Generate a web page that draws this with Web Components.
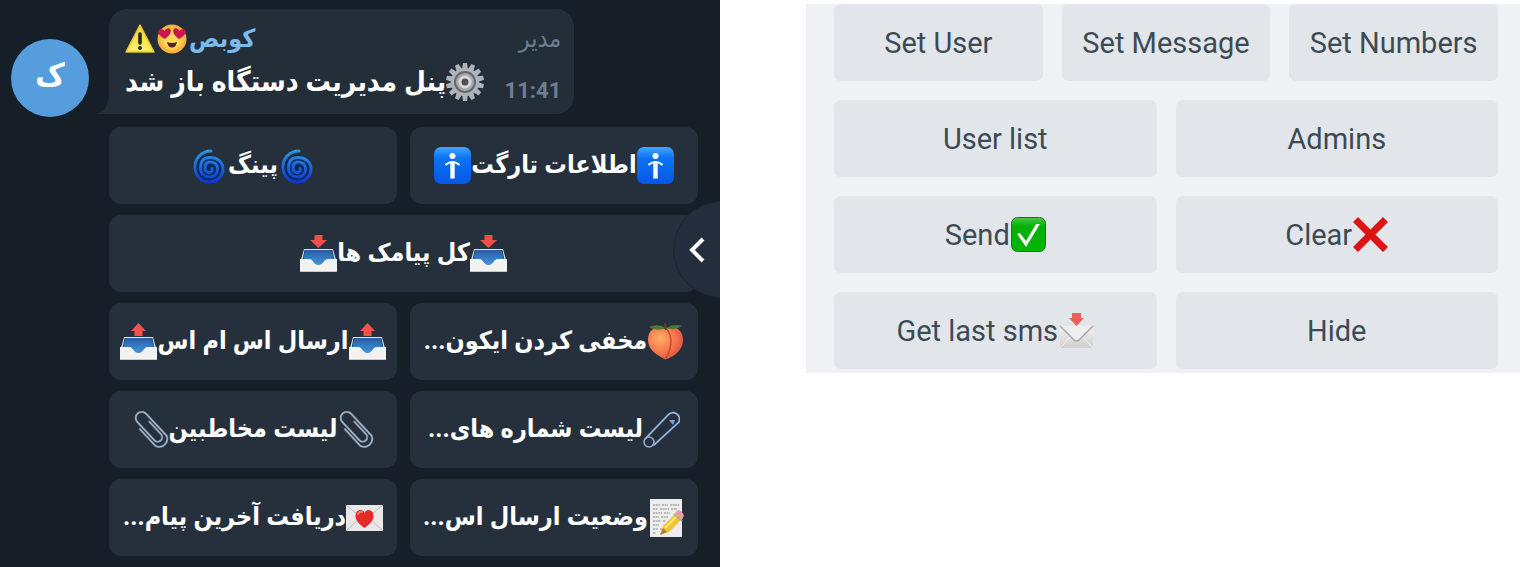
<!DOCTYPE html>
<html lang="fa">
<head>
<meta charset="utf-8">
<meta name="viewport" content="width=device-width, initial-scale=1">
<title>Bot panels</title>
<style>
  body { margin: 0; background: #fff; }
</style>
</head>
<body>
<panel-board>
  <chat-panel slot="chat">
    <chat-avatar slot="avatar">ک</chat-avatar>
    <chat-message slot="message">
      <span slot="name">کوبص</span>
      <emoji-icon slot="name" name="face"></emoji-icon>
      <emoji-icon slot="name" name="warning"></emoji-icon>
      <span slot="role">مدیر</span>
      <emoji-icon slot="text" name="gear"></emoji-icon>
      <span slot="text">پنل مدیریت دستگاه باز شد</span>
      <time slot="time">11:41</time>
    </chat-message>
    <key-button start="info" end="info">اطلاعات تارگت</key-button>
    <key-button start="cyclone" end="cyclone">پینگ</key-button>
    <key-button wide start="inbox" end="inbox">کل پیامک ها</key-button>
    <key-button start="peach">مخفی کردن ایکون...</key-button>
    <key-button start="outbox" end="outbox">ارسال اس ام اس</key-button>
    <key-button start="pin">لیست شماره های...</key-button>
    <key-button start="clip" end="clip">لیست مخاطبین</key-button>
    <key-button start="memo">وضعیت ارسال اس...</key-button>
    <key-button start="love">دریافت آخرین پیام...</key-button>
  </chat-panel>
  <reply-keyboard slot="keyboard">
    <reply-key third>Set User</reply-key>
    <reply-key third>Set Message</reply-key>
    <reply-key third>Set Numbers</reply-key>
    <reply-key>User list</reply-key>
    <reply-key>Admins</reply-key>
    <reply-key end="check">Send</reply-key>
    <reply-key end="cross">Clear</reply-key>
    <reply-key end="mail">Get last sms</reply-key>
    <reply-key>Hide</reply-key>
  </reply-keyboard>
</panel-board>

<script>
const tray = `<defs><linearGradient id="b" x1="0" y1="0" x2="0" y2="1"><stop offset="0" stop-color="#235f9f"/><stop offset="1" stop-color="#4a9be6"/></linearGradient></defs>
  <path d="M4 14h29l3 11H1z" fill="#dfe3e6"/><path d="M5 15h27l3 17H2z" fill="url(#b)"/><path d="M5 15l-2 10M32 15l2 10" stroke="#174a7c" fill="none"/>
  <path d="M0 24h9c5 0 4 6 9.500 6s4.500-6 9.500-6h9v13H0z" fill="#f2f2f0"/><path d="M0 36.500h37" stroke="#c9c9c6"/>`;
const clipWire = 'M23 10v17a4.500 4.500 0 0 1-9 0V2a6 6 0 0 1 12 0v30a8 8 0 0 1-15 0V9';
const clip = `<g fill="none" stroke-linecap="round" transform="rotate(-43 18.500 18.500) translate(0 2)"><path d="${clipWire}" stroke="#59697b" stroke-width="2.400"/><path d="${clipWire}" stroke="#a9b8c8" stroke-width="1.300"/></g>`;
const teeth = Array.from({length: 14}, (_, i) => `<path d="M17 0h4l1 7h-6z" transform="rotate(${i * 360 / 14} 19 19)"/>`).join('');
const ICONS = {
  info: [37, 37, `<defs><linearGradient id="g" x1="0" y1="0" x2="0" y2="1"><stop offset="0" stop-color="#43a4ff"/><stop offset=".3" stop-color="#0b73f3"/><stop offset="1" stop-color="#0757e6"/></linearGradient></defs>
    <rect width="37" height="37" rx="7" fill="url(#g)"/><circle cx="18.500" cy="9" r="3" fill="#fff"/><path d="M12 17.500q6.500-5 13 0" stroke="#fff" fill="none" stroke-width="2" stroke-linecap="round"/><path d="M18.500 14.500v17" stroke="#fff" stroke-width="4.400"/>`],
  cyclone: [38, 36, `<defs><linearGradient id="g" gradientUnits="userSpaceOnUse" x1="0" y1="2" x2="0" y2="35"><stop offset="0" stop-color="#2c9ade"/><stop offset="1" stop-color="#0e35d2"/></linearGradient></defs>
    <g transform="translate(3 0)"><circle cx="16" cy="20" r="13" fill="#06265c"/><path d="M18 3C8 3 1.500 11 2 20c.5 8 7 14 14 14 8 0 14-6 14-13S24 9.500 17 9.500 7.500 14 7.500 20s4 9 9 9 8-3 8-8-3.500-7-7.500-7-5 3-5 6 2 4.500 4.500 4.500 3-2 2.500-4" fill="none" stroke="url(#g)" stroke-width="3" stroke-linecap="round"/></g>`],
  inbox: [37, 37, tray + `<path d="M14.500 0h8v5h4.500l-8.500 8L10 5h4.500z" fill="#ef4f4a"/>`],
  outbox: [37, 37, tray + `<path d="M14.500 13h8V8H26L18.500 0 11 8h3.500z" fill="#f4514b"/>`],
  peach: [37, 37, `<defs><radialGradient id="g" cx=".35" cy=".35" r=".75"><stop offset="0" stop-color="#ffac68"/><stop offset=".6" stop-color="#f4744a"/><stop offset="1" stop-color="#d94b3f"/></radialGradient></defs>
    <path d="M18 6C8 1 1 8 1 17s8 15 17.500 19.500C29 33 36 26 36 17S29 1 18 6z" fill="url(#g)"/><path d="M19 5c7 8 6 20 0 30" fill="none" stroke="#c94b32" stroke-width="1.500"/><path d="M19 5Q11 0 2 4q8 5 17 1Q28 0 35 3q-7 5-16 2z" fill="#4c7a35"/><path d="M18 0l1 7" stroke="#5b4327" stroke-width="2"/>`],
  pin: [37, 37, `<g fill="none" stroke-linecap="round"><path d="M2 28L26 3q4-3 8 0t2 8L11 34" stroke="#6f8db6" stroke-width="2"/><path d="M2 28L26 3q4-3 8 0t2 8L11 34" stroke="#b5c7e0" stroke-width="1"/><circle cx="6" cy="31" r="5" stroke="#93acd0" stroke-width="1.600"/></g><path d="M26 9l6 0-2 5z" fill="#7ba4e0"/>`],
  clip: [37, 37, clip],
  memo: [37, 38, `<path d="M2 0h32v38H2z" fill="#ecedec"/><path d="M5 6h7m2 0h6m2 0h9M5 10h5m2 0h9m2 0h6M5 14h9m2 0h6M5 18h6m2 0h7M5 22h8m2 0h3M5 26h6M5 30h5m2 0h2M5 34h3" stroke="#858585" stroke-width="1.200" stroke-dasharray="2 .6"/>
    <path d="M12 36l3-9 14-14 6 6-14 14z" fill="#f4c430"/><path d="M17 29L31 15" stroke="#fce67a" stroke-width="2"/><path d="M27 14l3-3q4 0 6 6l-2 3z" fill="#eb99a5"/><path d="M26 15l8 7" stroke="#aab0a8" stroke-width="2"/><path d="M12 36l3-7 4 4z" fill="#b27c38"/>`],
  love: [37, 26, `<path d="M0 0h37v26H0z" fill="#e8e8e8"/><path d="M0 26l14-13M37 26L23 13M0 0l18.500 15L37 0" stroke="#b8b8b8" fill="none"/><path d="M18.500 23C13 19 9 15 9.500 10c.5-5 7-7 9-2 2-5 8.500-3 9 2 .5 5-3.500 9-9 13z" fill="#e22c2c"/><path d="M12 9q1-3 4-2" stroke="#ff7870" stroke-width="2" fill="none" stroke-linecap="round"/>`],
  face: [30, 30, `<defs><radialGradient id="g"><stop offset=".5" stop-color="#ffdb5c"/><stop offset="1" stop-color="#f2ab35"/></radialGradient></defs><circle cx="15" cy="15" r="14.500" fill="url(#g)"/>
    <path d="M8 15C3 12 0 9 1.500 6.500 3 4 6 5 7.500 7c1-2.500 4.500-4 6-1.500C15 8.500 12 12 8 15zM22 15c5-3 8-6 6.500-8.500C27 4 24 5 22.500 7c-1-2.500-4.500-4-6-1.500C15 8.500 18 12 22 15z" fill="#d0144f"/><path d="M10 18q5 2 10 0-1 5.500-5 5.500T10 18z" fill="#55251b"/>`],
  warning: [30, 30, `<defs><linearGradient id="g" x1="0" y1="0" x2="0" y2="1"><stop offset="0" stop-color="#f5d52f"/><stop offset="1" stop-color="#fff06a"/></linearGradient></defs><path d="M15 1L29 28H1z" fill="url(#g)" stroke="#e8c62e" stroke-linejoin="round" stroke-width="1.500"/><path d="M15 10v9" stroke="#2a2b25" stroke-width="3.600" stroke-linecap="round"/><circle cx="15" cy="24" r="2" fill="#2a2b25"/>`],
  gear: [38, 38, `<g fill="#aeb2b9">${teeth}</g><circle cx="19" cy="19" r="14" fill="#aeb2b9"/><circle cx="19" cy="19" r="10" fill="#a8a9ac" stroke="#66686d" stroke-width="2"/><circle cx="19" cy="19" r="5" fill="#4d4f55" stroke="#d5d7dc" stroke-width="3"/>`],
  check: [35, 35, `<defs><linearGradient id="g" x1="0" y1="0" x2="0" y2="1"><stop offset="0" stop-color="#52c74d"/><stop offset=".25" stop-color="#06af08"/><stop offset="1" stop-color="#03b604"/></linearGradient></defs><rect x=".5" y=".5" width="34" height="34" rx="6" fill="url(#g)" stroke="#087f15"/><path d="M6 17l3-1 6 8L25 7h4L15 30z" fill="#f5fff3"/>`],
  cross: [35, 35, `<path d="M0 5L5 0l12.500 12.500L30 0l5 5-12.500 12.500L35 30l-5 5-12.500-12.500L5 35l-5-5 12.500-12.500z" fill="#dc1414"/>`],
  mail: [35, 35, `<defs><linearGradient id="g" x1="0" y1="0" x2="0" y2="1"><stop offset="0" stop-color="#f2f2f2"/><stop offset="1" stop-color="#cfcfcf"/></linearGradient></defs><path d="M1 13h33v22H1z" fill="url(#g)"/><path d="M1 35l11-12M34 35L23 23" stroke="#f5f5f5" fill="none"/><path d="M1 13l14 14q2.500 2 5 0l14-14" stroke="#a9a9a9" stroke-width="1.500" fill="#eee"/><path d="M13 0h9v5h3l-7.500 8L10 5h3z" fill="#ea605b"/>`]
};

customElements.define('emoji-icon', class extends HTMLElement {
  static observedAttributes = ['name'];
  constructor() {
    super();
    this.attachShadow({ mode: 'open' });
  }
  attributeChangedCallback(attribute, previous, name) {
    const [w, h, art] = ICONS[name];
    this.shadowRoot.innerHTML = `<style>:host { display: inline-flex; flex: none; } svg { display: block; }</style>
      <svg width="${w}" height="${h}" viewBox="0 0 ${w} ${h}" aria-hidden="true">${art}</svg>`;
  }
});

const define = (tag, html, setup) => {
  const template = document.createElement('template');
  template.innerHTML = html;
  customElements.define(tag, class extends HTMLElement {
    constructor() {
      super();
      this.attachShadow({ mode: 'open' }).append(template.content.cloneNode(true));
    }
    connectedCallback() { setup?.(this, this.shadowRoot); }
  });
};

const addIcons = (host, root) => {
  for (const side of ['start', 'end']) {
    const name = host.getAttribute(side);
    const icon = root.querySelector('.' + side);
    if (name) icon.setAttribute('name', name); else icon?.remove();
  }
};

define('panel-board', `<style>
  :host { display: grid; grid-template-columns: 720fr 86fr 714fr; align-items: start; min-height: 100vh; }
  slot { display: block; }
  .keyboard { grid-column: 3; padding-top: 4px; }
  .chat { align-self: stretch; display: grid; }
</style>
<slot name="chat" class="chat"></slot><slot name="keyboard" class="keyboard"></slot>`);

define('chat-panel', `<style>
  :host { display: block; position: relative; overflow: hidden; box-sizing: border-box; padding: 9px 22px 11px 11px;
    background: #161e27; font-family: Roboto, "DejaVu Sans Condensed", "DejaVu Sans", sans-serif; }
  .row { display: flex; gap: 20px; align-items: flex-end; margin-bottom: 10px; }
  .message { display: block; flex: 1; padding-bottom: 3px; }
  .keys { display: grid; grid-template-columns: 1fr 1fr; gap: 11px 13px; margin-left: 98px; direction: rtl; }
  .back { position: absolute; right: -50px; top: 201px; width: 97px; height: 97px; box-sizing: border-box; padding: 0 0 0 14px;
    border: 1px solid #1b252f; border-radius: 50%; background: #232d3b; display: flex; align-items: center; }
</style>
<div class="row"><slot name="avatar"></slot><slot name="message" class="message"></slot></div>
<div class="keys"><slot></slot></div>
<button class="back" type="button" aria-label="Back"><svg width="17" height="28" viewBox="0 0 17 28"><path d="M15 3L4 14l11 11" fill="none" stroke="#fff" stroke-width="4"/></svg></button>`);

define('chat-avatar', `<style>
  :host { display: flex; flex: none; width: 78px; height: 78px; box-sizing: border-box; padding-bottom: 6px; border-radius: 50%;
    background: #559ddd; color: #fff; align-items: center; justify-content: center; font-size: 32px; font-weight: 700; line-height: 36px; }
</style><slot></slot>`);

define('chat-message', `<style>
  :host { display: grid; position: relative; box-sizing: border-box; width: 79%; height: 105px; grid-template-rows: 41px 1fr;
    padding: 9px 13px 9px 16px; border-radius: 18px 18px 18px 0; background: #232e39; }
  .head, .body { display: flex; justify-content: space-between; align-items: center; }
  .name, .text { display: flex; align-items: center; direction: rtl; white-space: nowrap; }
  .name { gap: 2px; color: #7abbe9; font-size: 25px; font-weight: 700; line-height: 32px; }
  .role { color: #6d7d8b; font-size: 25px; line-height: 32px; }
  .text { color: #fff; font-size: 28px; font-weight: 700; line-height: 36px; }
  .time { align-self: flex-end; color: #6d7f90; font-size: 22px; font-weight: 700; line-height: 28px; }
  .tail { position: absolute; left: -12px; bottom: 0; }
</style>
<svg class="tail" width="12" height="18" aria-hidden="true"><path d="M12 0v18H0Q11 14 12 0z" fill="#232e39"/></svg>
<div class="head"><div class="name"><slot name="name"></slot></div><div class="role"><slot name="role"></slot></div></div>
<div class="body"><div class="text"><slot name="text"></slot></div><div class="time"><slot name="time"></slot></div></div>`);

define('key-button', `<style>
  :host { display: block; min-width: 0; }
  :host([wide]) { grid-column: 1 / -1; }
  button { display: flex; width: 100%; height: 77px; padding: 0; border: 0; border-radius: 12px; background: #25303c; color: #fff;
    align-items: center; justify-content: center; direction: rtl; font-family: inherit; font-size: 25px; font-weight: 700;
    line-height: 36px; white-space: nowrap; }
  span { padding-bottom: 2px; }
</style>
<button type="button"><emoji-icon class="start"></emoji-icon><span><slot></slot></span><emoji-icon class="end"></emoji-icon></button>`, addIcons);

define('reply-keyboard', `<style>
  :host { display: grid; grid-template-columns: repeat(6, 1fr); gap: 19px; padding: 0 22px 4px 28px; background: #eff1f5; }
</style><slot></slot>`);

define('reply-key', `<style>
  :host { display: block; grid-column: span 3; min-width: 0; }
  :host([third]) { grid-column: span 2; }
  button { display: flex; width: 100%; height: 77px; padding: 0; border: 0; border-radius: 7px; background: #e2e6ea; color: #3c4a54;
    align-items: center; justify-content: center; gap: 1px; font: 400 29px/36px Roboto, sans-serif; white-space: nowrap; }
</style>
<button type="button"><emoji-icon class="start"></emoji-icon><span><slot></slot></span><emoji-icon class="end"></emoji-icon></button>`, addIcons);
</script>
</body>
</html>
